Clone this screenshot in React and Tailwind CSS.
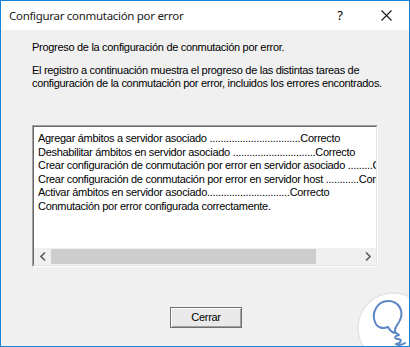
import React from 'react';

const lines = [
  'Agregar ámbitos a servidor asociado ' + '.'.repeat(33) + 'Correcto',
  'Deshabilitar ámbitos en servidor asociado ' + '.'.repeat(30) + 'Correcto',
  'Crear configuración de conmutación por error en servidor asociado ' + '.'.repeat(9) + 'Correcto',
  'Crear configuración de conmutación por error en servidor host ' + '.'.repeat(12) + 'Correcto',
  'Activar ámbitos en servidor asociado' + '.'.repeat(30) + 'Correcto',
  'Conmutación por error configurada correctamente.',
];

function Logo() {
  // watermark in the lower right corner
  return (
    <svg className="absolute left-[355px] top-[290px]" width="80" height="80" viewBox="0 0 80 80">
      <circle cx="37" cy="37" r="35" fill="#ffffff" stroke="#e4e4e4" strokeWidth="1.5" />
      <path
        d="M19 31 C15 21 22 10 32 10 C43 10 48 20 44 29 C42 34 38 36 39 41 L43 44 M19 31 C21 37 27 38 32 36 C34 40 37 42 40 42 M43 44 C38 45 38 48 42 48 C46 48 46 52 40 53 C42 54 46 54 49 52"
        fill="none"
        stroke="#5b87c5"
        strokeWidth="2"
        strokeLinecap="round"
        strokeLinejoin="round"
      />
    </svg>
  );
}

export default function App() {
  return (
    <div className="relative w-[410px] h-[347px] overflow-hidden border border-[#1883d7] bg-[#f0f0f0] flex flex-col font-['Liberation_Sans',Arial,sans-serif] text-black">
      {/* Title bar */}
      <div className="h-[29px] bg-white flex items-center shrink-0">
        <span className="pl-2 text-[11.5px] tracking-[-0.3px] font-['Noto_Sans',sans-serif] text-[#1a1a1a] flex-1">
          Configurar conmutación por error
        </span>
        <div className="w-[46px] h-full flex items-center justify-center text-[13px] font-['Noto_Sans',sans-serif]">?</div>
        <div className="w-[46px] h-full flex items-center justify-center">
          <svg width="11" height="11" viewBox="0 0 11 11">
            <path d="M0.5 0.5 L10.5 10.5 M10.5 0.5 L0.5 10.5" stroke="#1a1a1a" strokeWidth="1.1" />
          </svg>
        </div>
      </div>

      {/* Body */}
      <div className="flex flex-col pl-[31px] pr-[31px] pt-[11px] text-[11px] leading-[13px] tracking-[-0.3px]">
        <p className="whitespace-nowrap">Progreso de la configuración de conmutación por error.</p>
        <p className="mt-[10px] whitespace-nowrap">
          El registro a continuación muestra el progreso de las distintas tareas de
          <br />
          configuración de la conmutación por error, incluidos los errores encontrados.
        </p>

        {/* Log list */}
        <div className="mt-[35px] w-[346px] h-[142px] border-t border-l border-[#a0a0a0] border-r border-b border-r-white border-b-white flex">
          <div className="flex-1 border-t border-l border-[#696969] border-r border-b border-r-[#e3e3e3] border-b-[#e3e3e3] bg-white flex flex-col overflow-hidden">
            <div className="flex-1 overflow-hidden pl-[4px] pt-[5px] leading-[13.6px] whitespace-nowrap">
              {lines.map((l, i) => (
                <div key={i}>{l}</div>
              ))}
            </div>
            <div className="h-[17px] bg-[#f0f0f0] flex items-center shrink-0">
              <div className="w-[17px] h-full flex items-center justify-center">
                <svg width="6" height="9" viewBox="0 0 6 9">
                  <path d="M5 0.5 L1 4.5 L5 8.5" fill="none" stroke="#606060" strokeWidth="1.6" />
                </svg>
              </div>
              <div className="w-[265px] h-[15px] bg-[#cdcdcd]" />
              <div className="flex-1" />
              <div className="w-[17px] h-full flex items-center justify-center">
                <svg width="6" height="9" viewBox="0 0 6 9">
                  <path d="M1 0.5 L5 4.5 L1 8.5" fill="none" stroke="#606060" strokeWidth="1.6" />
                </svg>
              </div>
            </div>
          </div>
        </div>

        {/* Button */}
        <div className="flex justify-center mt-[40px] pl-[2px]">
          <button className="w-[72px] h-[21px] border border-[#707070] bg-[#e9e9e9] shadow-[inset_1px_1px_0_#ffffff,inset_-1px_-1px_0_#a0a0a0] text-[11px] flex items-center justify-center">
            Cerrar
          </button>
        </div>
      </div>

      <Logo />
    </div>
  );
}
